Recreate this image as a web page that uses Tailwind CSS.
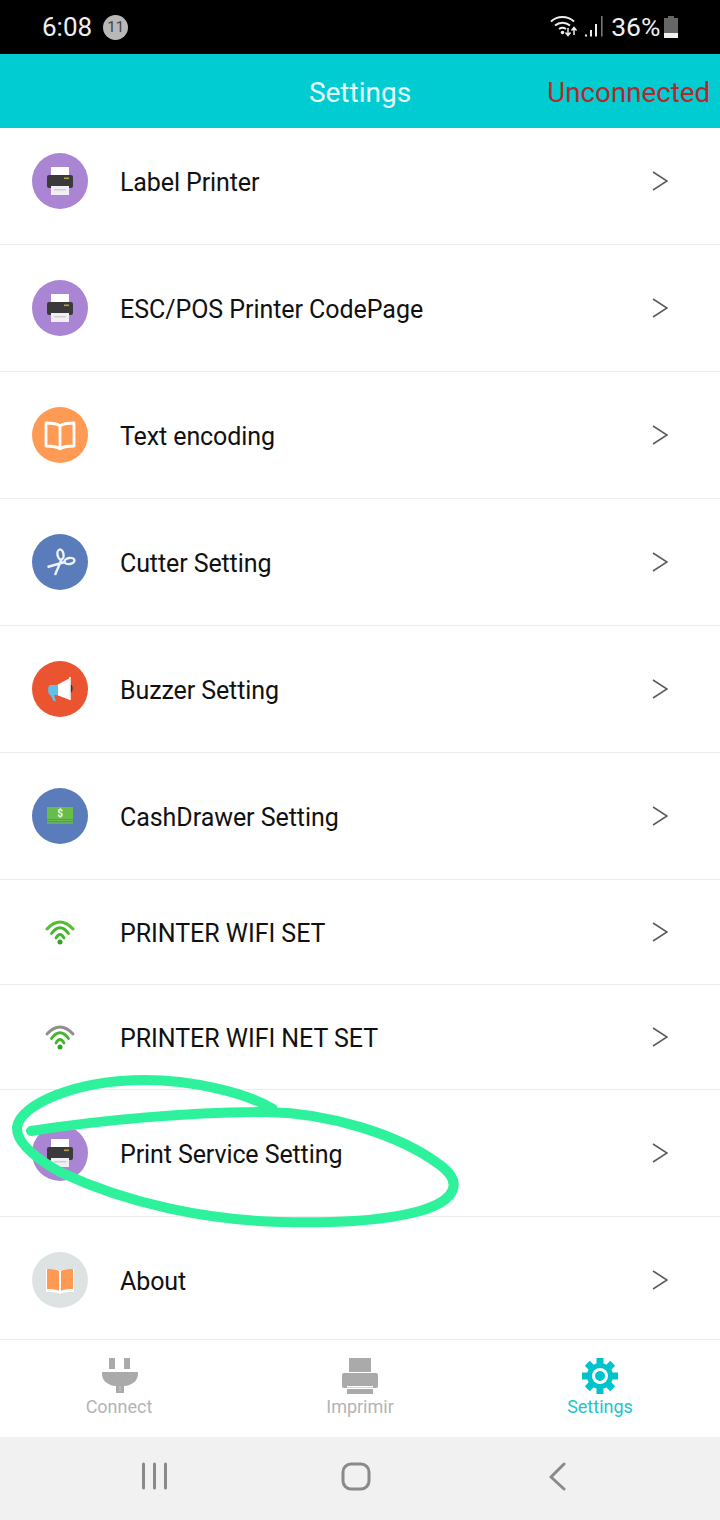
<!DOCTYPE html>
<html lang="en">

<head>
    <meta charset="UTF-8">
    <meta name="viewport" content="width=device-width, initial-scale=1.0">
    <title>Settings</title>
    <script src="https://cdn.jsdelivr.net/npm/@tailwindcss/browser@4"></script>
</head>

<body class="bg-white font-['Roboto',sans-serif]">
    <!-- shared icons -->
    <svg width="0" height="0" class="absolute">
        <defs>
            <symbol id="chev" viewBox="0 0 16 20">
                <path d="M1 1l14 9-14 9" fill="none" stroke="#5a5a5a" stroke-width="1.5" />
            </symbol>
            <symbol id="printer" viewBox="0 0 56 56">
                <circle cx="28" cy="28" r="28" fill="#a985d3" />
                <rect x="19" y="14" width="18" height="11" fill="#fff" />
                <rect x="15" y="22" width="26" height="13" rx="2" fill="#3a3a3a" />
                <rect x="19" y="33" width="18" height="9" fill="#f1eff4" />
                <rect x="22" y="36" width="12" height="1.5" fill="#cfcfd6" />
                <rect x="32" y="24.500" width="5" height="1.600" fill="#b5a24a" />
            </symbol>
        </defs>
    </svg>

    <div class="relative w-[720px] h-[1520px] flex flex-col overflow-hidden">
        <!-- Status bar -->
        <div class="h-[54px] bg-black flex items-center text-[#efefef]">
            <span class="ml-[42px] text-[26px] leading-none">6:08</span>
            <span class="ml-[11px] w-[25px] h-[25px] rounded-full bg-[#b8b8b8] text-[#444] text-[15px] flex items-center justify-center">11</span>
            <svg class="ml-[421px] mt-[-2px]" width="56" height="26" viewBox="0 0 56 26">
                <path d="M2 8.500a17 17 0 0 1 23 0M6 12.500a11.500 11.500 0 0 1 15 0M10 16a6 6 0 0 1 7 0" fill="none" stroke="#eee" stroke-width="2" />
                <circle cx="13.500" cy="19.500" r="1.800" fill="#eee" />
                <path d="M19 15v7m-2.500-2.500 2.500 3 2.500-3M25 22v-7m-2.500 2.500 2.500-3 2.500 3" fill="none" stroke="#eee" stroke-width="1.500" />
                <path d="M36 21.500h2v2h-2zM41 17h2v6.500h-2zM46 11h2v12.500h-2z" fill="#eee" />
                <rect x="52" y="3" width="1.600" height="20.500" fill="#777" />
            </svg>
            <span class="ml-[6px] text-[26.500px] leading-none">36%</span>
            <svg class="ml-[4px] mt-[-1px]" width="14" height="22" viewBox="0 0 14 22">
                <rect x="4" y="0" width="6" height="2" fill="#666" />
                <rect x="0" y="2" width="14" height="20" fill="#666" />
                <rect x="0" y="17" width="14" height="5" fill="#f2f2f2" />
            </svg>
        </div>

        <!-- Header -->
        <header class="relative h-[74px] bg-[#00ccd2] flex items-center justify-center">
            <h1 class="mt-[4px] text-[28px] text-[#e8fbfb] leading-none">Settings</h1>
            <span class="absolute right-[10px] top-[25px] text-[27.700px] leading-none text-[#b3292c]">Unconnected</span>
        </header>

        <!-- List -->
        <main class="flex-1 flex flex-col">
            <div class="h-[117px] flex items-center pl-[32px] pr-[52px] pb-[10px] border-b border-[#ececec]">
                <svg class="w-[56px] h-[56px]"><use href="#printer" /></svg>
                <span class="ml-[32px] mt-[4px] flex-1 text-[25px] tracking-[-0.1px] text-[#111]">Label Printer</span>
                <svg class="w-[16px] h-[20px]"><use href="#chev" /></svg>
            </div>
            <div class="h-[127px] flex items-center pl-[32px] pr-[52px] border-b border-[#ececec]">
                <svg class="w-[56px] h-[56px]"><use href="#printer" /></svg>
                <span class="ml-[32px] mt-[4px] flex-1 text-[25px] tracking-[-0.05px] text-[#111]">ESC/POS Printer CodePage</span>
                <svg class="w-[16px] h-[20px]"><use href="#chev" /></svg>
            </div>
            <div class="h-[127px] flex items-center pl-[32px] pr-[52px] border-b border-[#ececec]">
                <svg class="w-[56px] h-[56px]" viewBox="0 0 56 56">
                    <circle cx="28" cy="28" r="28" fill="#ff9a55" />
                    <path d="M28 19c-3-2.500-8-3-14-3v23c6 0 11 .5 14 3 3-2.500 8-3 14-3V16c-6 0-11 .5-14 3zM28 19v22" fill="none" stroke="#fff" stroke-width="2.800" stroke-linejoin="round" />
                </svg>
                <span class="ml-[32px] mt-[4px] flex-1 text-[25px] tracking-[-0.1px] text-[#111]">Text encoding</span>
                <svg class="w-[16px] h-[20px]"><use href="#chev" /></svg>
            </div>
            <div class="h-[127px] flex items-center pl-[32px] pr-[52px] border-b border-[#ececec]">
                <svg class="w-[56px] h-[56px]" viewBox="0 0 56 56">
                    <circle cx="28" cy="28" r="28" fill="#5a7cbb" />
                    <g fill="none" stroke="#eef1f7" stroke-width="2.400">
                        <ellipse cx="28.500" cy="20.500" rx="3" ry="5" transform="rotate(-10 28.500 20.500)" />
                        <ellipse cx="37.500" cy="27" rx="5" ry="3" transform="rotate(-10 37.500 27)" />
                        <path d="M29.500 25.500 23 41M33 28 15.500 33" />
                    </g>
                </svg>
                <span class="ml-[32px] mt-[4px] flex-1 text-[25px] tracking-[-0.1px] text-[#111]">Cutter Setting</span>
                <svg class="w-[16px] h-[20px]"><use href="#chev" /></svg>
            </div>
            <div class="h-[127px] flex items-center pl-[32px] pr-[52px] border-b border-[#ececec]">
                <svg class="w-[56px] h-[56px]" viewBox="0 0 56 56">
                    <circle cx="28" cy="28" r="28" fill="#ea5430" />
                    <path d="M38 23c3.500 0 3.500 9 0 9z" fill="#333" />
                    <path d="M25 24l13-7v22l-13-5z" fill="#fff" />
                    <rect x="37" y="16" width="1.800" height="23" fill="#f4f4f4" />
                    <path d="M18 24h8v10h-4l2 6h-2.500l-3-6h-.5c-2.500-1-2.500-9 0-10z" fill="#5fc0ea" />
                </svg>
                <span class="ml-[32px] mt-[4px] flex-1 text-[25px] tracking-[-0.1px] text-[#111]">Buzzer Setting</span>
                <svg class="w-[16px] h-[20px]"><use href="#chev" /></svg>
            </div>
            <div class="h-[127px] flex items-center pl-[32px] pr-[52px] border-b border-[#ececec]">
                <svg class="w-[56px] h-[56px]" viewBox="0 0 56 56">
                    <circle cx="28" cy="28" r="28" fill="#5a7cbb" />
                    <rect x="15" y="19" width="26" height="12" fill="#68bd4a" />
                    <path d="M15 32.500h26M15 35h26" stroke="#68bd4a" stroke-width="1.500" />
                    <text x="28" y="29" font-size="10" font-weight="700" fill="#f4fbee" text-anchor="middle" font-family="Roboto">$</text>
                </svg>
                <span class="ml-[32px] mt-[4px] flex-1 text-[25px] tracking-[-0.05px] text-[#111]">CashDrawer Setting</span>
                <svg class="w-[16px] h-[20px]"><use href="#chev" /></svg>
            </div>
            <div class="h-[105px] flex items-center pl-[32px] pr-[52px] border-b border-[#ececec]">
                <svg class="w-[56px] h-[56px]" viewBox="0 0 56 56">
                    <path d="M15 25Q28 11 41 25" fill="none" stroke="#55bd30" stroke-width="3" stroke-linecap="round" />
                    <path d="M19.500 29.500Q28 18 36.500 29.500M24 34Q28 27 32 34" fill="none" stroke="#44b52c" stroke-width="2.800" stroke-linecap="round" />
                    <circle cx="28" cy="38" r="2.500" fill="#2fa324" />
                </svg>
                <span class="ml-[32px] mt-[4px] flex-1 text-[25px] tracking-[-0.05px] text-[#111]">PRINTER WIFI SET</span>
                <svg class="w-[16px] h-[20px]"><use href="#chev" /></svg>
            </div>
            <div class="h-[105px] flex items-center pl-[32px] pr-[52px] border-b border-[#ececec]">
                <svg class="w-[56px] h-[56px]" viewBox="0 0 56 56">
                    <path d="M15 25Q28 11 41 25" fill="none" stroke="#8f8f8f" stroke-width="3" stroke-linecap="round" />
                    <path d="M19.500 29.500Q28 18 36.500 29.500M24 34Q28 27 32 34" fill="none" stroke="#44b52c" stroke-width="2.800" stroke-linecap="round" />
                    <circle cx="28" cy="38" r="2.500" fill="#2fa324" />
                </svg>
                <span class="ml-[32px] mt-[4px] flex-1 text-[25px] tracking-[-0.05px] text-[#111]">PRINTER WIFI NET SET</span>
                <svg class="w-[16px] h-[20px]"><use href="#chev" /></svg>
            </div>
            <div class="h-[127px] flex items-center pl-[32px] pr-[52px] border-b border-[#ececec]">
                <svg class="w-[56px] h-[56px]"><use href="#printer" /></svg>
                <span class="ml-[32px] mt-[4px] flex-1 text-[25px] tracking-[-0.1px] text-[#111]">Print Service Setting</span>
                <svg class="w-[16px] h-[20px]"><use href="#chev" /></svg>
            </div>
            <div class="h-[123px] flex items-center pl-[32px] pr-[52px] pt-[4px] border-b border-[#ececec]">
                <svg class="w-[56px] h-[56px]" viewBox="0 0 56 56">
                    <circle cx="28" cy="28" r="28" fill="#dde2e2" />
                    <path d="M14 17c5 0 11 0 14 2 3-2 9-2 14-2v23c-5 0-11 0-14 2-3-2-9-2-14-2z" fill="#fff" />
                    <path d="M15 17c5 0 10 .5 12 2v20c-2-1.500-7-2-12-2zM41 17c-5 0-10 .5-12 2v20c2-1.500 7-2 12-2z" fill="#ff9a55" />
                </svg>
                <span class="ml-[32px] mt-[4px] flex-1 text-[25px] tracking-[-0.1px] text-[#111]">About</span>
                <svg class="w-[16px] h-[20px]"><use href="#chev" /></svg>
            </div>

            <!-- Tab bar -->
            <nav class="flex-1 grid grid-cols-3">
                <div class="flex flex-col items-center pt-[18px]">
                    <svg width="36" height="36" viewBox="0 0 36 36">
                        <path d="M7 0h6v11H7zM22 0h6v11h-6z" fill="#aaa" />
                        <path d="M0 14h36v2c0 6-5 11-13 12h-1v7h-8v-7h-1C5 27 0 22 0 16z" fill="#aaa" />
                        <path d="M17.500 28h1v5h-1z" fill="#c8c8c8" />
                    </svg>
                    <span class="text-[18px] leading-[22px] mt-[2px] mr-[2px] text-[#b4b4b4]">Connect</span>
                </div>
                <div class="flex flex-col items-center pt-[18px]">
                    <svg width="36" height="36" viewBox="0 0 36 36">
                        <rect x="7" y="0" width="22" height="14" fill="#aaa" />
                        <path d="M2 15h32a2 2 0 0 1 2 2v11a2 2 0 0 1-2 2H2a2 2 0 0 1-2-2V17a2 2 0 0 1 2-2z" fill="#aaa" />
                        <rect x="5" y="28" width="26" height="1.500" fill="#fff" />
                        <rect x="5" y="31" width="26" height="5" fill="#aaa" />
                    </svg>
                    <span class="text-[18px] leading-[22px] mt-[2px] text-[#b4b4b4]">Imprimir</span>
                </div>
                <div class="flex flex-col items-center pt-[18px]">
                    <svg width="36" height="36" viewBox="0 0 36 36">
                        <g fill="#00c3cc">
                            <circle cx="18" cy="18" r="13" />
                            <rect x="14.500" y="0" width="7" height="7" />
                            <rect x="14.500" y="0" width="7" height="7" transform="rotate(45 18 18)" />
                            <rect x="14.500" y="0" width="7" height="7" transform="rotate(90 18 18)" />
                            <rect x="14.500" y="0" width="7" height="7" transform="rotate(135 18 18)" />
                            <rect x="14.500" y="0" width="7" height="7" transform="rotate(180 18 18)" />
                            <rect x="14.500" y="0" width="7" height="7" transform="rotate(225 18 18)" />
                            <rect x="14.500" y="0" width="7" height="7" transform="rotate(270 18 18)" />
                            <rect x="14.500" y="0" width="7" height="7" transform="rotate(315 18 18)" />
                        </g>
                        <circle cx="18" cy="18" r="6.500" fill="none" stroke="#fff" stroke-width="3" />
                    </svg>
                    <span class="text-[18px] leading-[22px] mt-[2px] text-[#22c4cc]">Settings</span>
                </div>
            </nav>
        </main>

        <!-- System nav bar -->
        <div class="relative h-[83px] bg-[#f1f1f1] shrink-0">
            <svg class="absolute left-[140px] top-[25px]" width="30" height="30" viewBox="0 0 30 30">
                <path d="M3.500 2v24M14.500 2v24M25.500 2v24" stroke="#8a8a8a" stroke-width="3" stroke-linecap="round" />
            </svg>
            <svg class="absolute left-[340px] top-[25px]" width="32" height="30" viewBox="0 0 32 30">
                <rect x="3" y="2" width="26" height="25" rx="8" fill="none" stroke="#8a8a8a" stroke-width="3" />
            </svg>
            <svg class="absolute left-[547px] top-[25px]" width="22" height="30" viewBox="0 0 22 30">
                <path d="M17 2 4 15l13 12" fill="none" stroke="#8a8a8a" stroke-width="3" stroke-linecap="round" stroke-linejoin="round" />
            </svg>
        </div>

        <!-- Hand drawn highlight over the list -->
        <svg class="absolute left-0 top-0 pointer-events-none" width="720" height="1520" viewBox="0 0 720 1520">
            <path d="M31 1131C100 1120 190 1112 267 1112C330 1113 400 1135 440 1165C463 1182 457 1200 420 1211C380 1222 330 1223 280 1222C210 1220 130 1205 60 1172C30 1155 16 1140 17 1127C20 1105 75 1080 145 1080C190 1080 245 1092 273 1109" fill="none" stroke="#2ef29b" stroke-width="10" stroke-linecap="round" stroke-linejoin="round" />
        </svg>
    </div>
</body>

</html>
